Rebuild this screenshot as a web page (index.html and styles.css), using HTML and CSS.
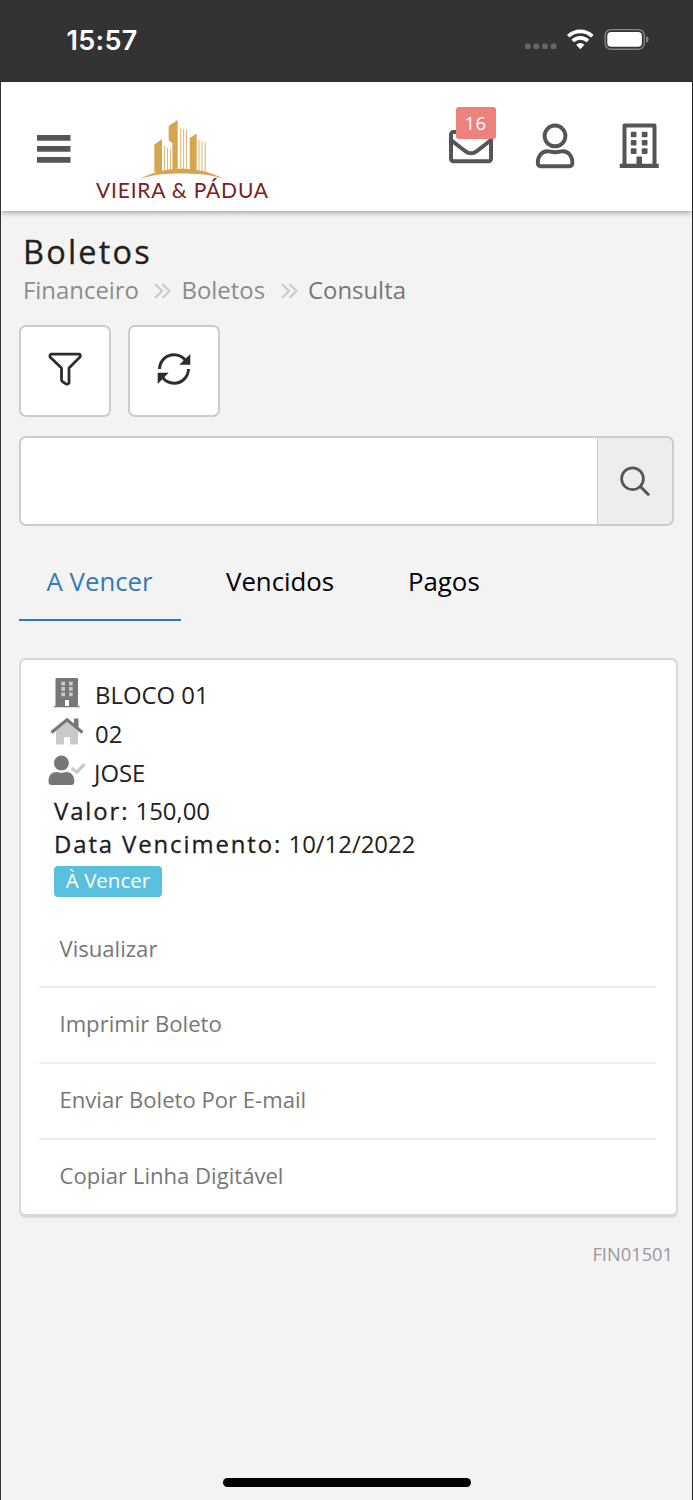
FILE: index.html
```html
<!DOCTYPE html>
<html lang="pt-BR">
<head>
<meta charset="utf-8">
<title>Boletos</title>
<link rel="stylesheet" href="styles.css">
</head>
<body>
<div class="screen">
  <div class="status">
    <span class="time">15:57</span>
    <svg class="status-icons" width="128" height="26" viewBox="522 26 128 26">
      <g fill="#666"><rect x="525" y="43.5" width="5.6" height="5.6" rx="1.6"/><rect x="533.6" y="43.5" width="5.6" height="5.6" rx="1.6"/><rect x="542.2" y="43.5" width="5.6" height="5.6" rx="1.6"/><rect x="550.8" y="43.5" width="5.6" height="5.6" rx="1.6"/></g>
      <g fill="none" stroke="#fff" stroke-width="3.7"><path d="M568.3 36.3a17 17 0 0 1 24 0"/><path d="M572.7 41a10.8 10.8 0 0 1 15.2 0"/></g>
      <path d="M576.2 44.7a5.8 5.8 0 0 1 8.2 0l-4.1 4.5z" fill="#fff"/>
      <rect x="605.1" y="29.6" width="39.2" height="19.6" rx="6" fill="none" stroke="#858585" stroke-width="1.4"/>
      <rect x="607.3" y="32" width="34.6" height="14.8" rx="3.8" fill="#fff"/>
      <path d="M646 36q2.6 1 2.6 3.4T646 42.800z" fill="#858585"/>
    </svg>
  </div>
  <header class="header">
    <svg class="menu" width="34" height="28" viewBox="0 0 34 28"><path d="M0 0h33.500v5.800H0zM0 11h33.500v5.800H0zM0 22h33.500v5.800H0z" fill="#555"/></svg>
    <svg class="logo" width="174" height="84" viewBox="95 118 174 84">
      <g fill="#d5a550">
        <path d="M154.300 144.500l7.700-5.200v33h-7.700z"/>
        <path d="M168.700 126l9-6v52h-5.300v-29l-3.700-2.500z"/>
        <path d="M189.700 138l7-4.500v40h-7z"/>
        <path d="M139.500 179c13-6 24-10.200 42-10.200s30 4.200 42.500 10.200c-14-4.500-26-5.600-42-5.600s-28 1.100-42.500 5.600z"/>
      </g>
      <path d="M164.500 146v26M167.500 147.500v24M170.500 149v23M180.700 128v43M183.600 129v42M186.400 130v42M199 140v31M202 141v31M205.200 142v30" stroke="#d5a550" stroke-width="1.100" opacity=".75"/>
      <text class="logo-text" x="96" y="198" textLength="172">VIEIRA &amp; PÁDUA</text>
    </svg>
    <nav class="actions">
      <div class="mail">
        <svg width="46" height="35" viewBox="448 128.500 46 35" fill="none" stroke="#555" stroke-width="4"><rect x="451" y="131.500" width="40" height="29.200" rx="2.500"/><path d="M451 139.500c5 4 9 7.200 14.500 11.300q5.500 4 11 0c5.500-4.100 9.500-7.300 14.500-11.300"/></svg>
        <span class="count">16</span>
      </div>
      <svg class="user" width="41" height="46" viewBox="535 123.500 41 46" fill="none" stroke="#555" stroke-width="3.900"><circle cx="555" cy="136.400" r="10.400"/><path d="M537.800 163.500c0-7 4-11.700 9.500-11.700 2.600 0 4 .9 7.800.9s5.200-.9 7.800-.9c5.500 0 9.500 4.700 9.500 11.700 0 2-1.200 3.200-3 3.200h-28.600c-1.800 0-3-1.200-3-3.200z"/></svg>
      <svg class="building" width="40" height="46" viewBox="618.500 123.500 40 46"><path d="M624 166v-40h30v40" fill="none" stroke="#555" stroke-width="4" stroke-linejoin="round"/><path d="M619.200 164.300h39v4.300h-39zM636 157h5.500v10H636z" fill="#555"/><g fill="#555"><rect x="630.300" y="132.200" width="5.700" height="5.600" rx="1"/><rect x="641.300" y="132.200" width="5.700" height="5.600" rx="1"/><rect x="630.300" y="140.500" width="5.700" height="5.600" rx="1"/><rect x="641.300" y="140.500" width="5.700" height="5.600" rx="1"/><rect x="630.300" y="148.800" width="5.700" height="5.600" rx="1"/><rect x="641.300" y="148.800" width="5.700" height="5.600" rx="1"/></g></svg>
    </nav>
  </header>
  <main class="content">
    <h1 class="title">Boletos</h1>
    <div class="crumbs">
      <span class="crumb-one">Financeiro</span>
      <svg class="sep" width="17" height="16" viewBox="0 0 17 16"><path d="M1 1l7 7-7 7M8.500 1l7 7-7 7"/></svg>
      <span class="crumb-two">Boletos</span>
      <svg class="sep" width="17" height="16" viewBox="0 0 17 16"><path d="M1 1l7 7-7 7M8.500 1l7 7-7 7"/></svg>
      <span class="crumb-last">Consulta</span>
    </div>
    <div class="tools">
      <button class="tool"><svg width="34" height="34" viewBox="48 352 34 34" fill="none" stroke="#2d2d2d" stroke-width="2.800" stroke-linejoin="round"><path d="M51 354.200h28.500q1.800 1.500 0 3.400L69 368v15q-1.500 2-3.500.7l-3.200-2.200q-.8-.7-.8-1.900V368L50.500 357.600q-1.500-2 .5-3.400z"/></svg></button>
      <button class="tool"><svg width="34" height="34" viewBox="157.500 352.500 34 34"><path d="M160 369.500c.3-8 6.300-14.200 14.500-14.200 5 0 8.800 2 11.800 6M189 369.500c-.3 8-6.300 14.200-14.500 14.200-5 0-8.800-2-11.800-6" fill="none" stroke="#2d2d2d" stroke-width="2.900"/><path d="M190.800 354.500v10.800h-11zM158.200 384.500v-11.200h11z" fill="#2d2d2d"/></svg></button>
    </div>
    <div class="search">
      <input class="field" type="text" aria-label="Pesquisar">
      <button class="go"><svg width="32" height="32" viewBox="620 466 32 32" fill="none" stroke="#555" stroke-width="2.700"><circle cx="632.500" cy="478.700" r="10.900"/><path d="M640.300 486.500l8.800 8.800" stroke-width="3"/></svg></button>
    </div>
    <div class="tabs">
      <span class="tab active">A Vencer</span><span class="tab second">Vencidos</span><span class="tab third">Pagos</span>
    </div>
    <section class="card">
      <div class="row"><svg class="row-icon" width="40" height="32" viewBox="48 676 40 32"><path d="M55.500 679q0-1 1-1h20.500q1 0 1 1v27h1.700v1.300H54V706h1.500z" fill="#777"/><path d="M61.300 681.700h3.700v3.700h-3.700zM69 681.700h3.700v3.700H69zM61.300 687h3.700v3.700h-3.700zM69 687h3.700v3.700H69zM61.300 692.500h3.700v3.700h-3.700zM69 692.500h3.700v3.700H69z" fill="#c9c9c9"/><path d="M65 700h4v6h-4z" fill="#fff"/></svg><span class="block">BLOCO 01</span></div>
      <div class="row"><svg class="row-icon" width="40" height="32" viewBox="48 715 40 32"><path d="M56 731l11-9.300L78 731v12q0 1.500-1.500 1.500H70v-7.300h-6v7.300h-6.500q-1.500 0-1.500-1.500z" fill="#c9c9c9"/><path d="M51.500 732.500L67 719.800l15.500 12.700" fill="none" stroke="#777" stroke-width="3.200"/><path d="M74 718.500h4.500v10L74 725z" fill="#777"/></svg><span class="unit">02</span></div>
      <div class="row"><svg class="row-icon" width="40" height="32" viewBox="48 754 40 32"><circle cx="61.400" cy="763" r="7.500" fill="#777"/><path d="M48.500 781.500c0-6.500 3.500-9.600 8-9.600 2 0 2.800.9 4.900.9s2.900-.9 4.900-.9c4.500 0 8 3.100 8 9.600q0 3.500-3 3.500H51.500q-3 0-3-3.500z" fill="#777"/><path d="M71.700 768l5 4.400 7.800-8.300" fill="none" stroke="#c9c9c9" stroke-width="3.200"/></svg><span class="person">JOSE</span></div>
      <div class="line"><b class="label label-value">Valor:</b><span class="amount">150,00</span></div>
      <div class="line"><b class="label label-date">Data Vencimento:</b><span class="date">10/12/2022</span></div>
      <span class="badge">À Vencer</span>
      <ul class="menu-list">
        <li class="item view">Visualizar</li>
        <li class="item print">Imprimir Boleto</li>
        <li class="item send">Enviar Boleto Por E-mail</li>
        <li class="item copy">Copiar Linha Digitável</li>
      </ul>
    </section>
    <div class="code">FIN01501</div>
  </main>
  <div class="home"></div>
</div>
</body>
</html>
```
FILE: styles.css
```css
* { box-sizing: border-box; }
body { margin: 0; background: #f3f3f3; font-family: "Open Sans", "Noto Sans", sans-serif; color: #212121; }
svg { display: block; flex: none; }
.screen { height: 1500px; display: flex; flex-direction: column; border-left: 1px solid #333; border-right: 1px solid #222; white-space: nowrap; }
.status { height: 82px; margin: 0 -1px; background: #333; border-bottom: 1px solid #292929; display: flex; justify-content: space-between; padding: 26px 43px 0 66px; }
.time { font: 600 27px/30px Inter, sans-serif; letter-spacing: .3px; margin-left: .5px; color: #fff; }
.header { height: 129px; background: #fff; box-shadow: 0 1px 6px rgba(0,0,0,.42); display: flex; clip-path: inset(0 0 -12px 0); flex: none; }
.menu { margin: 53px 0 0 36px; }
.logo { margin: 36px 0 0 24px; }
.logo-text { font: 400 21px Lato, sans-serif; fill: #7b2023; }
.actions { display: flex; margin-left: 178.5px; }
.mail { position: relative; width: 46px; margin-top: 46.5px; }
.count { position: absolute; left: 8px; top: -21.5px; width: 40px; height: 32px; border-radius: 3px; background: #ed827c; color: #fff; font-size: 18.5px; line-height: 31px; letter-spacing: .5px; text-align: center; }
.user { margin: 41px 0 0 41px; }
.building { margin: 41px 0 0 43px; }
.content { padding: 21px 14px 0 18px; }
.title { margin: 0 0 0 4px; font-size: 32.5px; font-weight: 500; line-height: 40px; height: 40px; letter-spacing: 2.2px; -webkit-text-stroke: .3px #212121; }
.crumbs { display: flex; height: 36px; line-height: 36px; margin-left: 4px; font-size: 23.9px; color: #8c8c8c; }
.crumb-one { width: 131px; }
.crumb-two { width: 99px; margin-left: 10.500px; }
.crumb-last { margin-left: 10.5px; color: #777; }
.sep { margin-top: 11px; fill: none; stroke: #c9c9c9; stroke-width: 2; }
.tools { display: flex; gap: 17.400px; margin-top: 17px; }
.tool { width: 92px; height: 92px; padding: 0 0 4px; border: 2px solid #ccc; border-radius: 7px; background: #fff; display: flex; align-items: center; justify-content: center; }
.search { display: flex; width: 655px; height: 90px; margin-top: 19px; }
.field { width: 578px; border: 2px solid #ccc; border-right: 0; border-radius: 7px 0 0 7px; background: #fff; padding: 0 20px; font: 24px "Open Sans", sans-serif; }
.go { flex: 1; border: 2px solid #ccc; border-left-width: 1px; border-radius: 0 7px 7px 0; background: #ededed; padding: 2px 0 0 2px; display: flex; align-items: center; justify-content: center; }
.tabs { display: flex; height: 75px; margin-top: 20px; font-size: 25.800px; line-height: 71px; color: #000; }
.tab.active { width: 162px; padding-left: 27.500px; color: #337ab7; border-bottom: 2px solid #337ab7; }
.tab.second { padding-left: 45px; width: 227px; }
.card { width: 659px; height: 560px; margin-top: 37px; border: 2px solid #ddd7d9; border-bottom-width: 4px; border-radius: 7px; background: #fff; padding: 15px 18px 0 18px; font-size: 23.900px; }
.row { display: flex; height: 39px; padding-left: 9px; line-height: 39px; }
.row-icon { margin-top: 1px; }
.block, .unit { margin-left: 7px; }
.person { margin-left: 6px; }
.line { display: flex; height: 33px; line-height: 33px; padding-left: 15px; position: relative; top: 2px; }
.label { font-weight: 500; letter-spacing: 1.900px; -webkit-text-stroke: .3px #212121; }
.label-value { width: 81.500px; }
.label-date { width: 234.500px; }
.badge { display: block; width: 108px; height: 31px; margin: 8px 0 0 15px; border-radius: 4px; background: #5bc0de; color: #fff; font-size: 20.500px; line-height: 28px; text-align: center; }
.menu-list { list-style: none; margin: 15.500px 0 0; padding: 0; font-size: 22.100px; color: #777; width: 617px; }
.item { height: 75.700px; line-height: 71px; padding-left: 20.500px; border-bottom: 2px solid #eee; }
.item:last-child { border-bottom: 0; }
.code { margin: 22px 5px 0 0; text-align: right; font-size: 18.300px; line-height: 28px; color: #999; }
.home { width: 248px; height: 9px; margin: auto 0 13px 222px; border-radius: 5px; background: #000; }
```
